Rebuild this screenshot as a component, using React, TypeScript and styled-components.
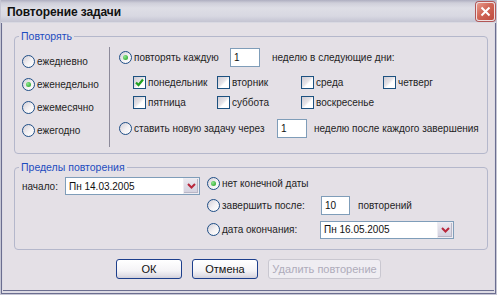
import React from 'react';
import styled, { createGlobalStyle } from 'styled-components';

const GlobalStyle = createGlobalStyle`
  html, body { margin: 0; padding: 0; background: #e4e0e6; }
  body {
    font-family: 'Liberation Sans', Arial, sans-serif;
    font-size: 10px;
    color: #1e1e1e;
  }
  * { box-sizing: border-box; }
`;

const Window = styled.div`
  width: 497px;
  height: 295px;
  display: flex;
  flex-direction: column;
  background: #e4e0e6;
  border: 1px solid #c6c6d4;
  border-top: none;
  box-shadow: inset 1px 0 #6b6e90, inset -1px 0 #6b6e90, inset 0 -1px #6b6e90,
    inset 2px 0 #dddbe4, inset -2px 0 #dddbe4, inset 0 -3px #dddbe4, inset 0 -4px #6b6e90;
  overflow: hidden;
`;

const TitleBar = styled.div`
  height: 23px;
  flex: none;
  display: flex;
  align-items: center;
  justify-content: space-between;
  padding: 0 1px 0 6px;
  background: linear-gradient(#aeaec0 0, #cfcfda 3px, #dedee6 8px, #d8d8e2 16px, #c4c4d2 22px, #eeeef2 23px);
`;

const Title = styled.span`
  font-weight: bold;
  font-size: 12px;
  color: #111;
  letter-spacing: -0.1px;
`;

const CloseButton = styled.div`
  width: 19px;
  height: 19px;
  border-radius: 3px;
  border: 1px solid #f0e0e0;
  box-shadow: 0 0 0 1px #b25656;
  background: linear-gradient(135deg, #e89a8c 0, #d06656 45%, #bf4c40 100%);
  display: flex;
  align-items: center;
  justify-content: center;
`;

const Body = styled.div`
  flex: 1;
  display: flex;
  flex-direction: column;
  padding: 7px 0 0 13px;
`;

const Group = styled.fieldset<{ $h: number; $mt?: number }>`
  margin: ${p => p.$mt || 0}px 0 0 0;
  padding: 0;
  width: 474px;
  height: ${p => p.$h}px;
  min-width: 0;
  border: 1px solid #b4b7cb;
  border-radius: 4px;
`;

const Legend = styled.legend`
  margin-left: 4px;
  padding: 0 2px;
  color: #1d4cbf;
  font-size: 10.5px;
  line-height: 13px;
`;

const Row = styled.div<{ $h?: number; $mt?: number }>`
  display: flex;
  align-items: center;
  height: ${p => (p.$h ? `${p.$h}px` : 'auto')};
  margin-top: ${p => p.$mt || 0}px;
`;

const Split = styled.div`
  display: flex;
`;

const LeftCol = styled.div`
  width: 94px;
  padding: 7px 0 0 7px;
  display: flex;
  flex-direction: column;
`;

const Separator = styled.div`
  width: 1px;
  height: 100px;
  margin-top: 4px;
  background: #8c8a9a;
  flex: none;
`;

const RightCol = styled.div`
  padding: 5px 0 0 9px;
  display: flex;
  flex-direction: column;
`;

const Option = styled.label<{ $w?: number }>`
  display: inline-flex;
  align-items: center;
  gap: 2px;
  white-space: nowrap;
  flex: none;
  width: ${p => (p.$w ? `${p.$w}px` : 'auto')};
`;

const RadioDot = styled.span<{ $on?: boolean }>`
  width: 13px;
  height: 13px;
  flex: none;
  position: relative;
  border-radius: 50%;
  border: 1px solid #1f4e86;
  background: linear-gradient(135deg, #d2ced6 0, #f4f2f4 55%, #ffffff 100%);
  &::after {
    content: '';
    display: ${p => (p.$on ? 'block' : 'none')};
    position: absolute;
    left: 3px;
    top: 3px;
    width: 5px;
    height: 5px;
    border-radius: 50%;
    background: radial-gradient(circle at 35% 35%, #8ee88e, #1c9a1c);
  }
`;

const CheckBox = styled.span`
  width: 13px;
  height: 13px;
  flex: none;
  border: 1px solid #1c5180;
  background: linear-gradient(135deg, #cfcbd4 0, #e6e4e8 45%, #ffffff 60%);
  display: flex;
  align-items: center;
  justify-content: center;
`;

const CheckGrid = styled.div`
  display: grid;
  grid-template-columns: 84px 84px 82px auto;
  grid-auto-rows: 14px;
  row-gap: 6px;
  margin: 8px 0 0 14px;
  align-items: center;
`;

const Field = styled.div<{ $w: number; $h?: number }>`
  width: ${p => p.$w}px;
  height: ${p => p.$h || 19}px;
  flex: none;
  border: 1px solid #7f9db9;
  background: #fff;
  display: flex;
  align-items: center;
  padding-left: 3px;
  color: #111;
`;

const Combo = styled(Field)`
  padding: 0 0 0 3px;
  justify-content: space-between;
`;

const DropButton = styled.div`
  width: 16px;
  height: 100%;
  border: 1px solid #eeedf2;
  box-shadow: inset -1px -1px #b8b6c6;
  background: linear-gradient(#ebe9f0, #d2d0de);
  display: flex;
  align-items: center;
  justify-content: center;
`;

const Trail = styled.span<{ $ml: number }>`
  margin-left: ${p => p.$ml}px;
  white-space: nowrap;
`;

const LimitsRow = styled.div`
  display: flex;
`;

const StartPart = styled.div`
  display: flex;
  align-items: center;
  height: 18px;
  margin: 3px 0 0 7px;
`;

const StartLabel = styled.span`
  width: 43px;
`;

const EndPart = styled.div`
  display: flex;
  flex-direction: column;
  gap: 5px;
  margin: 2px 0 0 7px;
`;

const ButtonRow = styled.div`
  display: flex;
  justify-content: center;
  gap: 10px;
  width: 474px;
  padding-right: 5px;
  margin-top: 9px;
`;

const Button = styled.div<{ $w: number; $disabled?: boolean }>`
  width: ${p => p.$w}px;
  height: 20px;
  border-radius: 3px;
  border: 1px solid ${p => (p.$disabled ? '#c9c7d0' : '#1d3f8c')};
  background: ${p =>
    p.$disabled
      ? '#efedf2'
      : 'linear-gradient(#ffffff 0, #f4f3f6 60%, #e2e0e8 85%, #d2d0da 100%)'};
  color: ${p => (p.$disabled ? '#aeabba' : '#111')};
  font-size: 11px;
  display: flex;
  align-items: center;
  justify-content: center;
`;

const Radio = ({ on, children, w }: { on?: boolean; children?: React.ReactNode; w?: number }) => (
  <Option $w={w}>
    <RadioDot $on={on} />
    {children}
  </Option>
);

const Check = ({ on, children }: { on?: boolean; children: React.ReactNode }) => (
  <Option>
    <CheckBox>
      {on && (
        <svg width="11" height="11" viewBox="0 0 11 11">
          <path d="M2 5.5 L4.5 8 L9 2.5" stroke="#21a121" strokeWidth="2.2" fill="none" />
        </svg>
      )}
    </CheckBox>
    {children}
  </Option>
);

const DateCombo = ({ value, w }: { value: string; w: number }) => (
  <Combo $w={w} $h={18}>
    <span>{value}</span>
    <DropButton>
      <svg width="9" height="6" viewBox="0 0 9 6">
        <path d="M1 1 L4.5 4.5 L8 1" stroke="#b8283c" strokeWidth="2" fill="none" />
      </svg>
    </DropButton>
  </Combo>
);

const days = [
  { name: 'понедельник', on: true },
  { name: 'вторник' },
  { name: 'среда' },
  { name: 'четверг' },
  { name: 'пятница' },
  { name: 'суббота' },
  { name: 'воскресенье' },
];

export default function App() {
  return (
    <>
      <GlobalStyle />
      <Window>
        <TitleBar>
          <Title>Повторение задачи</Title>
          <CloseButton>
            <svg width="11" height="11" viewBox="0 0 11 11">
              <path d="M1.5 1.5 L9.5 9.5 M9.5 1.5 L1.5 9.5" stroke="#fff" strokeWidth="2" />
            </svg>
          </CloseButton>
        </TitleBar>
        <Body>
          <Group $h={124}>
            <Legend>Повторять</Legend>
            <Split>
              <LeftCol>
                <Row $h={23}><Radio>ежедневно</Radio></Row>
                <Row $h={23}><Radio on>еженедельно</Radio></Row>
                <Row $h={23}><Radio>ежемесячно</Radio></Row>
                <Row $h={23}><Radio>ежегодно</Radio></Row>
              </LeftCol>
              <Separator />
              <RightCol>
                <Row $h={19}>
                  <Radio on w={111}>повторять каждую</Radio>
                  <Field $w={30}>1</Field>
                  <Trail $ml={12}>неделю в следующие дни:</Trail>
                </Row>
                <CheckGrid>
                  {days.map(d => (
                    <Check key={d.name} on={d.on}>{d.name}</Check>
                  ))}
                </CheckGrid>
                <Row $h={19} $mt={10}>
                  <Radio w={158}>ставить новую задачу через</Radio>
                  <Field $w={30}>1</Field>
                  <Trail $ml={7}>неделю после каждого завершения</Trail>
                </Row>
              </RightCol>
            </Split>
          </Group>
          <Group $h={89} $mt={7}>
            <Legend>Пределы повторения</Legend>
            <LimitsRow>
              <StartPart>
                <StartLabel>начало:</StartLabel>
                <DateCombo value="Пн 14.03.2005" w={135} />
              </StartPart>
              <EndPart>
                <Row $h={15}><Radio on>нет конечной даты</Radio></Row>
                <Row $h={19}>
                  <Radio w={114}>завершить после:</Radio>
                  <Field $w={29}>10</Field>
                  <Trail $ml={8}>повторений</Trail>
                </Row>
                <Row $h={19}>
                  <Radio w={113}>дата окончания:</Radio>
                  <DateCombo value="Пн 16.05.2005" w={134} />
                </Row>
              </EndPart>
            </LimitsRow>
          </Group>
          <ButtonRow>
            <Button $w={66}>ОК</Button>
            <Button $w={66}>Отмена</Button>
            <Button $w={113} $disabled>Удалить повторение</Button>
          </ButtonRow>
        </Body>
      </Window>
    </>
  );
}
